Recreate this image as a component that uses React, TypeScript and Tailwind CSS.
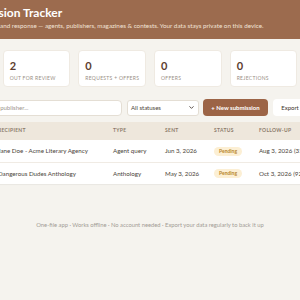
import { ChevronDown } from "lucide-react";

const STATS = [
  { value: 2, label: "Total" },
  { value: 2, label: "Out for review" },
  { value: 0, label: "Requests + offers" },
  { value: 0, label: "Offers" },
  { value: 0, label: "Rejections" },
  { value: 0, label: "Withdrawn" },
];

const ROWS = [
  {
    title: "The Night Orchard",
    recipient: "Jane Doe - Acme Literary Agency",
    type: "Agent query",
    sent: "Jun 3, 2026",
    status: "Pending",
    followUp: "Aug 3, 2026 (31 days)",
  },
  {
    title: "Hell's Bells",
    recipient: "Dangerous Dudes Anthology",
    type: "Anthology",
    sent: "May 3, 2026",
    status: "Pending",
    followUp: "Oct 3, 2026 (92 days)",
  },
];

export default function App() {
  return (
    <div className="min-h-screen bg-[#f5f3ee] overflow-hidden font-['Lato','Open_Sans',sans-serif] text-[#4a3f38]">
      {/* Header */}
      <header className="bg-[#9c6b4e] h-[39px] flex justify-center">
        <div className="w-[380px] shrink-0 pt-[5px]">
          <h1 className="text-[12px] leading-[15px] font-bold text-white">Submission Tracker</h1>
          <p className="text-[6.3px] leading-[9px] mt-[1px] text-[#f1e2d6] whitespace-nowrap">
            Log any query and response — agents, publishers, magazines &amp; contests. Your data stays private on this device.
          </p>
        </div>
      </header>

      <div className="flex justify-center">
        <main className="w-[446px] shrink-0">
          {/* Stats */}
          <div className="grid grid-cols-6 gap-2 mt-[11px]">
            {STATS.map((s) => (
              <div key={s.label} className="bg-white rounded-[4px] border border-[#efeae2] h-[37px] px-[6px] pt-[8px]">
                <div className="text-[11px] leading-[13px] font-bold text-[#5c3d2e]">{s.value}</div>
                <div className="text-[5px] leading-[7px] mt-[3px] uppercase tracking-[0.06em] text-[#9a8f86] whitespace-nowrap">{s.label}</div>
              </div>
            ))}
          </div>

          {/* Toolbar */}
          <div className="flex items-center gap-[4px] mt-[12px] h-[17px]">
            <input
              placeholder="Search by title, recipient, publisher..."
              className="w-[195px] h-[16px] bg-white border border-[#e4ded4] rounded-[4px] px-[6px] text-[6px] placeholder:text-[#9d958d] outline-none"
            />
            <div className="w-[72px] h-[16px] ml-[1px] bg-white border border-[#e4ded4] rounded-[3px] px-[3px] flex items-center justify-between text-[6px] text-[#4a3f38]">
              <span>All statuses</span>
              <ChevronDown className="w-[7px] h-[7px] text-[#4a3f38]" strokeWidth={3} />
            </div>
            <button className="w-[65px] h-[17px] bg-[#9c6446] text-white rounded-[4px] text-[6px] font-bold">+ New submission</button>
            <button className="w-[34px] h-[17px] ml-[1px] bg-white rounded-[4px] text-[6px] text-[#3d332c]">Export</button>
            <button className="w-[34px] h-[17px] bg-white rounded-[4px] text-[6px] text-[#3d332c]">Import</button>
          </div>

          {/* Table */}
          <div className="mt-[6px] bg-white rounded-[4px] overflow-hidden shadow-[0_1px_1px_rgba(0,0,0,0.05)]">
            <table className="w-full table-fixed border-collapse text-left">
              <colgroup>
                <col className="w-[63px]" />
                <col className="w-[115px]" />
                <col className="w-[52px]" />
                <col className="w-[49px]" />
                <col className="w-[45px]" />
                <col className="w-[79px]" />
                <col className="w-[43px]" />
              </colgroup>
              <thead>
                <tr className="bg-[#eee7dc] h-[18px] text-[5px] uppercase tracking-[0.06em] text-[#8c7b6b] font-bold">
                  <th className="px-[8px]">Title</th>
                  <th className="px-[8px]">Recipient</th>
                  <th className="px-[8px]">Type</th>
                  <th className="px-[8px]">Sent</th>
                  <th className="px-[8px]">Status</th>
                  <th className="px-[8px]">Follow-up</th>
                  <th className="px-[8px]"></th>
                </tr>
              </thead>
              <tbody>
                {ROWS.map((r, i) => (
                  <tr key={r.title} className={`h-[22px] text-[6.2px] whitespace-nowrap ${i > 0 ? "border-t border-[#f0ebe4]" : ""}`}>
                    <td className="px-[8px] font-bold overflow-hidden">{r.title}</td>
                    <td className="px-[8px] overflow-hidden">{r.recipient}</td>
                    <td className="px-[8px]">{r.type}</td>
                    <td className="px-[8px]">{r.sent}</td>
                    <td className="px-[8px]">
                      <span className="inline-block bg-[#fcefd4] text-[#b8862b] font-bold text-[5px] leading-[9px] px-[5px] rounded-full">
                        {r.status}
                      </span>
                    </td>
                    <td className="px-[8px] overflow-hidden">{r.followUp}</td>
                    <td className="px-[8px] text-[#9c6446]">Edit</td>
                  </tr>
                ))}
              </tbody>
            </table>
          </div>

          {/* Footer */}
          <p className="text-center text-[5.8px] text-[#a29c95] mt-[37px]">
            One-file app · Works offline · No account needed · Export your data regularly to back it up
          </p>
        </main>
      </div>
    </div>
  );
}
